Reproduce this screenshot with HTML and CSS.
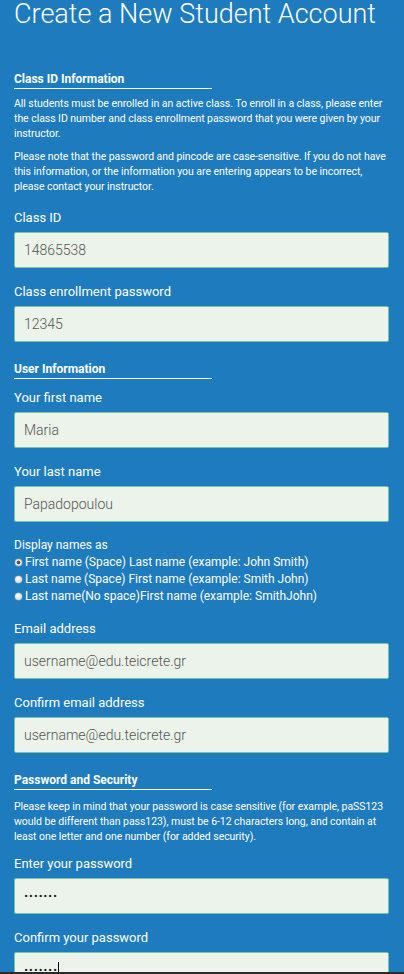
FILE: index.html
```html
<!DOCTYPE html>
<html lang="en">
<head>
  <meta charset="UTF-8" />
  <meta name="viewport" content="width=device-width, initial-scale=1.0" />
  <title>Create a New Student Account</title>
  <link rel="stylesheet" href="styles.css">
</head>
<body>
  <h1>Create a New Student Account</h1>

  <form class="signup">
    <h2 class="section-title">Class ID Information</h2>
    <p class="note">All students must be enrolled in an active class. To enroll in a class, please enter the class ID number and class enrollment password that you were given by your instructor.</p>
    <p class="note">Please note that the password and pincode are case-sensitive. If you do not have this information, or the information you are entering appears to be incorrect, please contact your instructor.</p>

    <div class="field">
      <label for="classId">Class ID</label>
      <input type="text" id="classId" value="14865538" />
    </div>
    <div class="field">
      <label for="classPass">Class enrollment password</label>
      <input type="text" id="classPass" value="12345" />
    </div>

    <h2 class="section-title">User Information</h2>
    <div class="field first">
      <label for="firstName">Your first name</label>
      <input type="text" id="firstName" value="Maria" />
    </div>
    <div class="field">
      <label for="lastName">Your last name</label>
      <input type="text" id="lastName" value="Papadopoulou" />
    </div>

    <div class="display-names">
      <div class="group-label">Display names as</div>
      <label class="radio"><input type="radio" name="display" checked /> First name (Space) Last name (example: John Smith)</label>
      <label class="radio"><input type="radio" name="display" /> Last name (Space) First name (example: Smith John)</label>
      <label class="radio"><input type="radio" name="display" /> Last name(No space)First name (example: SmithJohn)</label>
    </div>

    <div class="field">
      <label for="email">Email address</label>
      <input type="text" id="email" value="username@edu.teicrete.gr" />
    </div>
    <div class="field">
      <label for="email2">Confirm email address</label>
      <input type="text" id="email2" value="username@edu.teicrete.gr" />
    </div>

    <h2 class="section-title">Password and Security</h2>
    <p class="note pass-note">Please keep in mind that your password is case sensitive (for example, paSS123 would be different than pass123), must be 6-12 characters long, and contain at least one letter and one number (for added security).</p>

    <div class="field first-pass">
      <label for="pass">Enter your password</label>
      <input type="text" id="pass" class="dots" value="·······" />
    </div>
    <div class="field">
      <label for="pass2">Confirm your password</label>
      <div class="fake-input dots">·······<span class="caret"></span></div>
    </div>
  </form>
</body>
</html>
```

FILE: styles.css
```css
body {
  font-family: Roboto, "Liberation Sans", sans-serif;
  margin: 0;
  padding: 0 15px 0 14px;
  background-color: #1e7bbe;
  color: #fff;
  overflow: hidden;
  height: 974px;
  box-sizing: border-box;
  border-bottom: 2px solid #2b2b2b;
}
h1 {
  font-weight: 300;
  font-size: 27px;
  line-height: 30px;
  margin: -1px 0 0;
}
.signup {
  margin-top: 42px;
}
.section-title {
  width: 198px;
  font-size: 12px;
  font-weight: 700;
  line-height: 16px;
  margin: 19px 0 0;
  padding-bottom: 1px;
  border-bottom: 1px solid #fff;
}
.signup > .section-title:first-child {
  margin-top: 0;
}
.note {
  font-size: 10.5px;
  line-height: 15px;
  letter-spacing: -0.05px;
  margin: 8px 0 0;
}
.section-title + .note {
  margin-top: 7px;
}
.section-title + .pass-note {
  margin-top: 9px;
}
.field {
  margin-top: 15px;
}
.field.first {
  margin-top: 10px;
}
.field.first-pass {
  margin-top: 11px;
}
.field label,
.group-label {
  display: block;
  font-size: 13px;
  line-height: 18px;
  margin-bottom: 5px;
}
.field input,
.fake-input {
  display: block;
  width: 100%;
  height: 36px;
  box-sizing: border-box;
  padding: 0 9px;
  border: 1px solid #79c3a6;
  border-radius: 2px;
  background: #ebf3ea;
  font-family: Roboto, "Liberation Sans", sans-serif;
  font-size: 14px;
  font-weight: 300;
  color: #555;
  outline: none;
}
.fake-input {
  line-height: 34px;
}
.field .dots,
.fake-input.dots {
  color: #111;
  font-weight: 700;
  letter-spacing: 0.6px;
}
.caret {
  display: inline-block;
  width: 1px;
  height: 15px;
  background: #000;
  vertical-align: -2px;
}
.display-names {
  margin-top: 15px;
}
.group-label {
  font-size: 12px;
  line-height: 17px;
  margin-bottom: 0;
}
.radio {
  display: flex;
  align-items: center;
  gap: 3px;
  font-size: 12px;
  line-height: 17px;
}
.radio input {
  appearance: none;
  -webkit-appearance: none;
  width: 7px;
  height: 7px;
  margin: 0 0 0 1px;
  border-radius: 50%;
  background: radial-gradient(circle at 40% 35%, #fff, #cfcfcf);
  box-shadow: 0 0 0 0.5px #999;
}
.radio input:checked {
  background: radial-gradient(circle, #555 0 1.6px, #e8e8e8 2.2px, #c8c8c8);
}
```
